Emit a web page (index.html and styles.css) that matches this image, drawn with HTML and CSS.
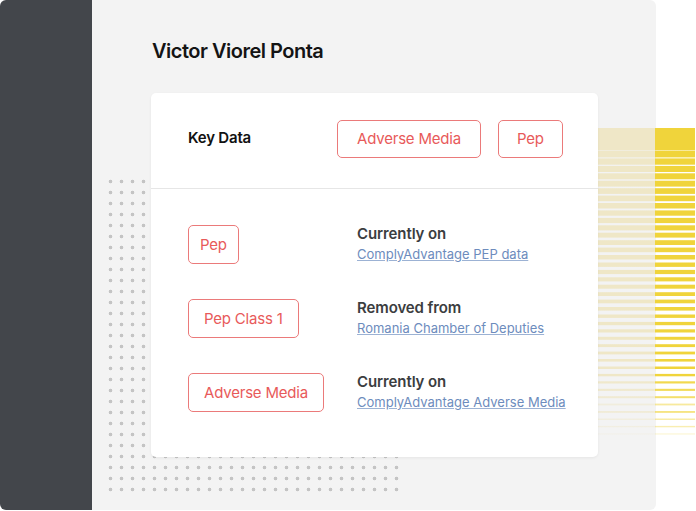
FILE: index.html
```html
<!DOCTYPE html>
<html>
	<head>
		<title>Victor Viorel Ponta</title>
		<link rel="stylesheet" href="styles.css">
	</head>
	<body>
		<div class="dots"></div>
		<svg class="stripes" width="98" height="310" viewBox="0 0 98 310">
			<defs>
				<linearGradient id="band" x1="0" x2="1" y1="0" y2="0">
					<stop offset="0.592" stop-color="#efe7c7"/>
					<stop offset="0.592" stop-color="#f0d43b"/>
				</linearGradient>
			</defs>
			<g fill="url(#band)">
				<rect x="0" y="0" width="97" height="22.5"/>
				<rect x="0" y="23" width="97" height="6.4"/>
				<rect x="0" y="30.4" width="97" height="6.3"/>
				<rect x="0" y="37.9" width="97" height="6.1"/>
				<rect x="0" y="45.3" width="97" height="6"/>
				<rect x="0" y="52.7" width="97" height="5.9"/>
				<rect x="0" y="60.2" width="97" height="5.7"/>
				<rect x="0" y="67.6" width="97" height="5.6"/>
				<rect x="0" y="75" width="97" height="5.5"/>
				<rect x="0" y="82.4" width="97" height="5.3"/>
				<rect x="0" y="89.9" width="97" height="5.2"/>
				<rect x="0" y="97.3" width="97" height="5.1"/>
				<rect x="0" y="104.7" width="97" height="4.9"/>
				<rect x="0" y="112.2" width="97" height="4.8"/>
				<rect x="0" y="119.6" width="97" height="4.6"/>
				<rect x="0" y="127" width="97" height="4.5"/>
				<rect x="0" y="134.5" width="97" height="4.4"/>
				<rect x="0" y="141.9" width="97" height="4.2"/>
				<rect x="0" y="149.3" width="97" height="4.1"/>
				<rect x="0" y="156.7" width="97" height="4"/>
				<rect x="0" y="164.2" width="97" height="3.8"/>
				<rect x="0" y="171.6" width="97" height="3.7"/>
				<rect x="0" y="179" width="97" height="3.6"/>
				<rect x="0" y="186.5" width="97" height="3.4"/>
				<rect x="0" y="193.9" width="97" height="3.3"/>
				<rect x="0" y="201.3" width="97" height="3.2"/>
				<rect x="0" y="208.8" width="97" height="3"/>
				<rect x="0" y="216.2" width="97" height="2.9"/>
				<rect x="0" y="223.6" width="97" height="2.8"/>
				<rect x="0" y="231" width="97" height="2.6"/>
				<rect x="0" y="238.5" width="97" height="2.5"/>
				<rect x="0" y="245.9" width="97" height="2.4"/>
				<rect x="0" y="253.3" width="97" height="2.2" opacity="0.9"/>
				<rect x="0" y="260.8" width="97" height="2.1" opacity="0.85"/>
				<rect x="0" y="268.2" width="97" height="2" opacity="0.75"/>
				<rect x="0" y="275.6" width="97" height="1.8" opacity="0.5"/>
				<rect x="0" y="283.1" width="97" height="1.7" opacity="0.7"/>
				<rect x="0" y="290.5" width="97" height="1.5" opacity="0.45"/>
				<rect x="0" y="297.9" width="97" height="1.4" opacity="0.4"/>
				<rect x="0" y="305.3" width="97" height="1.3" opacity="0.2"/>
			</g>
		</svg>

		<div class="window">
			<div class="sidebar"></div>
			<div class="main">
				<h1>Victor Viorel Ponta</h1>
				<div class="card">
					<div class="card-head">
						<div class="head-label">Key Data</div>
						<div class="tags">
							<span class="tag tag-big">Adverse Media</span>
							<span class="tag tag-big">Pep</span>
						</div>
					</div>
					<div class="card-body">
						<div class="row">
							<div><span class="tag tag-small">Pep</span></div>
							<div class="source">
								<div class="source-title">Currently on</div>
								<a href="#">ComplyAdvantage PEP data</a>
							</div>
						</div>
						<div class="row">
							<div><span class="tag">Pep Class 1</span></div>
							<div class="source">
								<div class="source-title">Removed from</div>
								<a href="#">Romania Chamber of Deputies</a>
							</div>
						</div>
						<div class="row">
							<div><span class="tag">Adverse Media</span></div>
							<div class="source">
								<div class="source-title">Currently on</div>
								<a href="#">ComplyAdvantage Adverse Media</a>
							</div>
						</div>
					</div>
				</div>
			</div>
		</div>
	</body>
</html>
```

FILE: styles.css
```css
html, body {
	margin: 0;
	padding: 0;
	background: #fff;
	font-family: Inter, "Liberation Sans", sans-serif;
}
body {
	position: relative;
	width: 696px;
	height: 511px;
	overflow: hidden;
}

.window {
	display: flex;
	width: 656px;
	height: 510px;
	border-radius: 6px;
	overflow: hidden;
}
.sidebar {
	width: 92px;
	background: #43464b;
}
.main {
	flex: 1;
	background: #f3f3f3;
	padding: 39px 58px 0 59px;
}
h1 {
	margin: 0 0 30px 1px;
	font-size: 20px;
	line-height: 24px;
	font-weight: 600;
	letter-spacing: -0.5px;
	color: #141414;
}

/* dotted grid behind the card */
.dots {
	position: absolute;
	left: 105px;
	top: 176px;
	width: 297px;
	height: 319px;
	z-index: 1;
	background-image: radial-gradient(circle at 5.5px 5.5px, #c4c4c4 1.6px, transparent 2.1px);
	background-size: 11px 11px;
}
.stripes {
	position: absolute;
	left: 598px;
	top: 128px;
	z-index: 1;
}

.card {
	position: relative;
	z-index: 2;
	height: 364px;
	background: #fff;
	border-radius: 5px;
	box-shadow: 0 1px 3px rgba(0, 0, 0, 0.06);
}
.card-head {
	display: flex;
	align-items: center;
	height: 96px;
	padding-left: 37px;
	border-bottom: 1px solid #e6e6e6;
	box-sizing: border-box;
}
.head-label {
	width: 149px;
	margin-top: -6px;
	font-size: 15px;
	font-weight: 600;
	letter-spacing: -0.2px;
	color: #111;
}
.tags {
	display: flex;
	gap: 17px;
	margin-top: -4px;
}
.tag {
	display: inline-flex;
	align-items: center;
	height: 39px;
	padding: 0 15px;
	box-sizing: border-box;
	border: 1px solid #eb7a7a;
	border-radius: 5px;
	color: #e85a5a;
	font-size: 15px;
	letter-spacing: -0.2px;
}
.tag-big {
	height: 38px;
	padding: 0 19px 0 19px;
}
.tags .tag-big + .tag-big {
	padding: 0 18px;
}
.tag-small {
	padding: 0 11px;
}

.card-body {
	padding: 36px 0 0 37px;
}
.row {
	display: grid;
	grid-template-columns: 169px 1fr;
	grid-template-rows: 39px;
	align-items: center;
	margin-bottom: 35px;
}
.row > div:first-child {
	display: flex;
}
.source {
	margin-bottom: 2px;
}
.source-title {
	font-size: 15px;
	line-height: 20px;
	font-weight: 600;
	letter-spacing: -0.1px;
	color: #3b3d40;
}
.source a {
	display: block;
	margin-top: 2px;
	font-size: 13px;
	line-height: 17px;
	color: #6d8cbd;
	text-decoration-color: #9cb2d4;
}
```
